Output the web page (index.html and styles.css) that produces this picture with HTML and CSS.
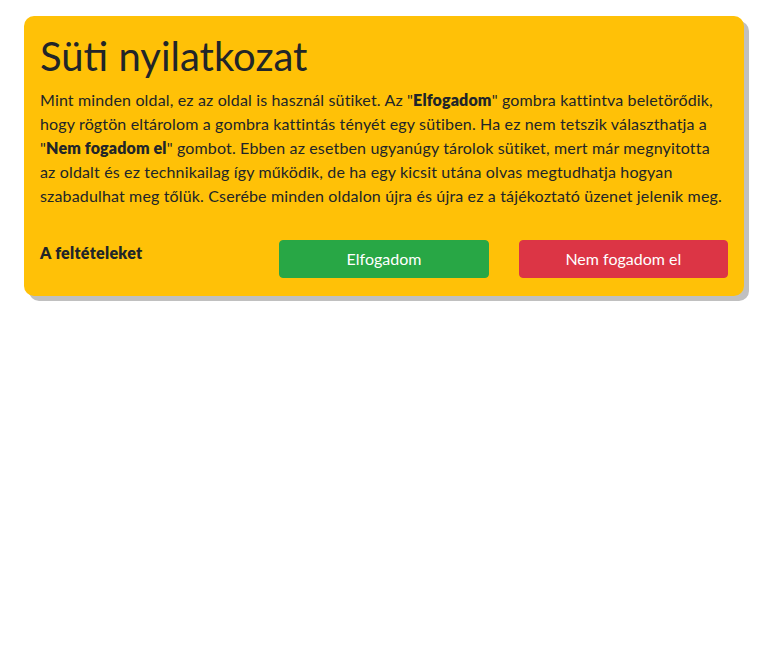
FILE: index.html
```html
<!DOCTYPE html>
<html lang="hu">
<head>
<meta charset="utf-8">
<title>Süti nyilatkozat</title>
<link rel="stylesheet" href="styles.css">
</head>
<body>
<div class="card">
  <h1 class="title">Süti nyilatkozat</h1>
  <p class="text">Mint minden oldal, ez az oldal is használ sütiket. Az "<b>Elfogadom</b>" gombra kattintva beletörődik, hogy rögtön eltárolom a gombra kattintás tényét egy sütiben. Ha ez nem tetszik választhatja a "<b>Nem fogadom el</b>" gombot. Ebben az esetben ugyanúgy tárolok sütiket, mert már megnyitotta az oldalt és ez technikailag így működik, de ha egy kicsit utána olvas megtudhatja hogyan szabadulhat meg tőlük. Cserébe minden oldalon újra és újra ez a tájékoztató üzenet jelenik meg.</p>
  <div class="row">
    <div class="col"><a class="terms" href="#">A feltételeket</a></div>
    <div class="col"><button class="btn btn-accept">Elfogadom</button></div>
    <div class="col"><button class="btn btn-decline">Nem fogadom el</button></div>
  </div>
</div>
</body>
</html>
```
FILE: styles.css
```css
html, body {
  margin: 0;
  padding: 0;
  background: #fff;
}
body {
  font-family: "Lato", "Open Sans", sans-serif;
  font-size: 16px;
  line-height: 1.5;
  color: #212529;
  padding: 16px 24px;
}
.card {
  width: 720px;
  box-sizing: border-box;
  background: #ffc107;
  border-radius: 10px;
  box-shadow: 5px 5px 0 #c0c0c0;
  padding: 16px 16px 18px;
}
.title {
  margin: 0 0 8px;
  font-size: 40px;
  font-weight: 400;
  line-height: 1.2;
}
.text {
  margin: 0 0 32px;
  letter-spacing: 0.15px;
}
.text b {
  font-weight: 800;
}
.row {
  display: grid;
  grid-template-columns: repeat(3, 1fr);
  column-gap: 30px;
}
.terms {
  color: #212529;
  font-weight: 800;
  letter-spacing: 0.3px;
  text-decoration: none;
  display: block;
  padding-top: 1px;
}
.btn {
  display: block;
  width: 100%;
  height: 38px;
  border: 1px solid transparent;
  border-radius: 4px;
  color: #fff;
  font-family: inherit;
  font-size: 16px;
  line-height: 1.5;
  padding: 6px 12px;
  cursor: pointer;
}
.btn-accept {
  background: #28a745;
  border-color: #28a745;
}
.btn-decline {
  background: #dc3545;
  border-color: #dc3545;
}
```
